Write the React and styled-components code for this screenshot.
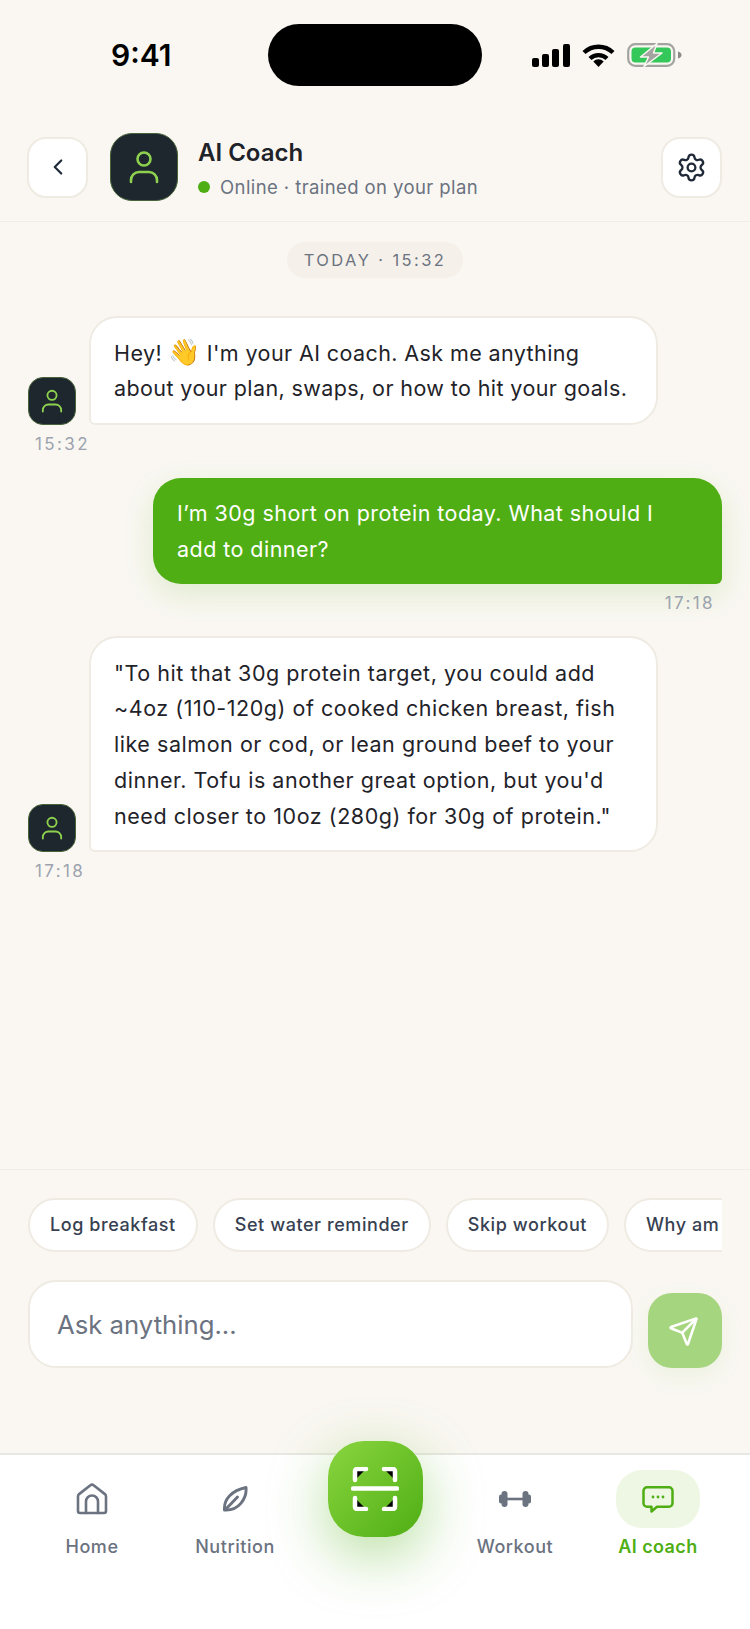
import React from 'react';
import styled, { createGlobalStyle } from 'styled-components';
import { ChevronLeft, Settings, Send } from 'lucide-react';

const GlobalStyle = createGlobalStyle`
    html, body {
        margin: 0;
        padding: 0;
        background: #faf7f2;
    }
    * {
        box-sizing: border-box;
    }
`;

const CoachIcon = ({size}) => (
    <svg width={size} height={size} viewBox="0 0 68 68" fill="none" stroke="#8ed14f" strokeWidth="2.6" strokeLinecap="round">
        <circle cx="34" cy="26" r="6.5" />
        <path d="M21 49v-2a8 8 0 0 1 8-8h10a8 8 0 0 1 8 8v2" />
    </svg>
);

const SignalIcon = () => (
    <svg width="38" height="23" viewBox="0 0 38 23" fill="#000">
        <rect x="0" y="14" width="7" height="9" rx="2" />
        <rect x="10" y="10" width="7" height="13" rx="2" />
        <rect x="20" y="5" width="7" height="18" rx="2" />
        <rect x="31" y="0" width="7" height="23" rx="2" />
    </svg>
);

const WifiIcon = () => (
    <svg width="33" height="23" viewBox="0 0 33 23" fill="none" stroke="#000" strokeWidth="4.4">
        <path d="M2 8.5a21 21 0 0 1 29 0" />
        <path d="M8 14.5a12.5 12.5 0 0 1 17 0" />
        <path d="M16.5 23l-5.2-5.6a7.4 7.4 0 0 1 10.4 0z" fill="#000" stroke="none" />
    </svg>
);

const BatteryIcon = () => (
    <svg width="55" height="24" viewBox="0 0 55 24" fill="none">
        <rect x="1.2" y="1.2" width="46" height="21.6" rx="7" stroke="#a3a3a0" strokeWidth="2.2" />
        <rect x="4.5" y="4.5" width="39.5" height="15" rx="4" fill="#34c759" />
        <path d="M51 8.500c2 .4 3.500 1.600 3.500 3.500s-1.500 3.100-3.500 3.500z" fill="#8a8a88" />
        <path d="M30 0.500L13.500 14h8L17 23.500 35 10h-8.500z" fill="#a3a3a0" stroke="#faf7f2" strokeWidth="1.500" strokeLinejoin="round" />
    </svg>
);

const WaveEmoji = () => (
    <Wave role="img" aria-label="waving hand">👋</Wave>
);

const HomeIcon = () => (
    <svg width="32" height="32" viewBox="0 0 32 32" fill="none" stroke="#6b7280" strokeWidth="2.6" strokeLinecap="round" strokeLinejoin="round">
        <path d="M2 13.500c0-1 .4-1.800 1.100-2.400L14.400 2.300a2.500 2.500 0 0 1 3.200 0l11.300 8.800c.7.600 1.100 1.400 1.100 2.400V28a2 2 0 0 1-2 2H4a2 2 0 0 1-2-2z" />
        <path d="M10 30V18.500a6 6 0 0 1 12 0V30" />
    </svg>
);

const LeafIcon = () => (
    <svg width="26" height="26" viewBox="0 0 26 26" fill="none" stroke="#6b7280" strokeWidth="2.9" strokeLinecap="round" strokeLinejoin="round">
        <path d="M2.500 24C1.500 13 10 4.500 24 1.500 25 12 17 25 2.500 24z" />
        <path d="M3.500 23.500L15.500 11" />
    </svg>
);

const DumbbellIcon = () => (
    <svg width="32" height="16" viewBox="0 0 32 16" fill="#6b7280">
        <rect x="0" y="3.500" width="4" height="9" rx="2" />
        <rect x="2.500" y="0" width="6" height="16" rx="3" />
        <rect x="8" y="6.700" width="16" height="2.600" />
        <rect x="23.500" y="0" width="6" height="16" rx="3" />
        <rect x="28" y="3.500" width="4" height="9" rx="2" />
    </svg>
);

const ChatIcon = () => (
    <svg width="32" height="27" viewBox="0 0 32 27" fill="none">
        <path d="M5 1.300h22a3.500 3.500 0 0 1 3.500 3.500v12.400a3.500 3.500 0 0 1-3.500 3.500H15l-5.500 4.800v-4.800H5a3.500 3.500 0 0 1-3.500-3.500V4.800A3.500 3.500 0 0 1 5 1.300z" stroke="#4fae14" strokeWidth="2.500" strokeLinejoin="round" />
        <circle cx="11" cy="11" r="1.400" fill="#4fae14" />
        <circle cx="16" cy="11" r="1.400" fill="#4fae14" />
        <circle cx="21" cy="11" r="1.400" fill="#4fae14" />
    </svg>
);

// the corner paths keep the default black fill, the reference shows it too
const ScanIcon = () => (
    <svg width="48" height="44" viewBox="0 0 48 44" stroke="#fff" strokeWidth="4.5" strokeLinecap="round" strokeLinejoin="round">
        <path d="M4 13V4a2 2 0 0 1 2-2h9" />
        <path d="M33 2h9a2 2 0 0 1 2 2v9" />
        <path d="M4 31v9a2 2 0 0 0 2 2h9" />
        <path d="M33 42h9a2 2 0 0 0 2-2v-9" />
        <path d="M2 21.500h44" fill="none" />
    </svg>
);

const chips = ['Log breakfast', 'Set water reminder', 'Skip workout', 'Why am I not losing weight?'];

const App = () => {
    return (
        <Screen>
            <GlobalStyle />
            <StatusBar>
                <Clock>9:41</Clock>
                <Island />
                <StatusIcons>
                    <SignalIcon />
                    <WifiIcon />
                    <BatteryIcon />
                </StatusIcons>
            </StatusBar>

            <Header>
                <SquareButton>
                    <ChevronLeft size={26} strokeWidth={2} color="#1f2937" />
                </SquareButton>
                <Avatar size={68} radius={22}>
                    <CoachIcon size={68} />
                </Avatar>
                <HeaderText>
                    <Title>AI Coach</Title>
                    <Subtitle>
                        <OnlineDot />
                        Online · trained on your plan
                    </Subtitle>
                </HeaderText>
                <SquareButton push>
                    <Settings size={31} strokeWidth={1.8} color="#1f2937" />
                </SquareButton>
            </Header>

            <Messages>
                <DayPill>TODAY · 15:32</DayPill>

                <CoachMessage>
                    <CoachRow>
                        <Avatar size={48} radius={15}>
                            <CoachIcon size={48} />
                        </Avatar>
                        <CoachBubble tight>
                            Hey! <WaveEmoji /> I'm your AI coach. Ask me anything about your plan, swaps, or how to hit your goals.
                        </CoachBubble>
                    </CoachRow>
                    <CoachTime>15:32</CoachTime>
                </CoachMessage>

                <UserMessage>
                    <UserBubble>I’m 30g short on protein today. What should I add to dinner?</UserBubble>
                    <UserTime>17:18</UserTime>
                </UserMessage>

                <CoachMessage>
                    <CoachRow>
                        <Avatar size={48} radius={15}>
                            <CoachIcon size={48} />
                        </Avatar>
                        <CoachBubble>
                            "To hit that 30g protein target, you could add ~4oz (110-120g) of cooked chicken breast, fish like salmon or cod, or lean ground beef to your dinner. Tofu is another great option, but you'd need closer to 10oz (280g) for 30g of protein."
                        </CoachBubble>
                    </CoachRow>
                    <CoachTime>17:18</CoachTime>
                </CoachMessage>
            </Messages>

            <Composer>
                <ChipRow>
                    {chips.map(chip => <Chip key={chip}>{chip}</Chip>)}
                </ChipRow>
                <InputRow>
                    <AskInput placeholder="Ask anything..." />
                    <SendButton>
                        <Send size={31} strokeWidth={2} color="#fff" />
                    </SendButton>
                </InputRow>
            </Composer>

            <Nav>
                <NavItem>
                    <NavIcon><HomeIcon /></NavIcon>
                    <NavLabel>Home</NavLabel>
                </NavItem>
                <NavItem>
                    <NavIcon><LeafIcon /></NavIcon>
                    <NavLabel>Nutrition</NavLabel>
                </NavItem>
                <ScanButton>
                    <ScanIcon />
                </ScanButton>
                <NavItem>
                    <NavIcon><DumbbellIcon /></NavIcon>
                    <NavLabel>Workout</NavLabel>
                </NavItem>
                <NavItem>
                    <NavIcon active><ChatIcon /></NavIcon>
                    <NavLabel active>AI coach</NavLabel>
                </NavItem>
            </Nav>
        </Screen>
    );
};

export default App;

/** Screen styled components */
const Screen = styled.div`
    display: flex;
    flex-direction: column;
    width: 750px;
    height: 1629px;
    overflow: hidden;
    background: #faf7f2;
    font-family: Inter, "Noto Sans", sans-serif;
    color: #1f2937;
`;

const StatusBar = styled.div`
    display: grid;
    grid-template-columns: 268px 214px 268px;
    align-items: center;
    padding-top: 24px;
    height: 133px;
    align-content: start;
`;

const Clock = styled.div`
    padding-left: 111px;
    font-size: 30px;
    font-weight: 600;
    line-height: 62px;
    color: #000;
`;

const Island = styled.div`
    height: 62px;
    border-radius: 31px;
    background: #000;
`;

const StatusIcons = styled.div`
    display: flex;
    align-items: center;
    gap: 12px;
    padding-left: 50px;
`;

const Header = styled.header`
    display: flex;
    align-items: center;
    gap: 22px;
    padding: 0 28px 20px 27px;
    border-bottom: 1px solid #f0ede6;
`;

const SquareButton = styled.div`
    display: flex;
    align-items: center;
    justify-content: center;
    width: 61px;
    height: 61px;
    margin-left: ${props => (props.push ? 'auto' : '0')};
    border: 2px solid #efebe3;
    border-radius: 19px;
    background: #fff;
`;

const Avatar = styled.div`
    flex: none;
    width: ${props => props.size}px;
    height: ${props => props.size}px;
    border: 1px solid #47633a;
    border-radius: ${props => props.radius}px;
    background: #1e272e;
    overflow: hidden;
    svg {
        display: block;
        margin: -1px;
    }
`;

const HeaderText = styled.div`
    display: flex;
    flex-direction: column;
    gap: 6px;
    margin-left: -2px;
    padding-top: 4px;
`;

const Title = styled.div`
    font-size: 24px;
    font-weight: 600;
    line-height: 30px;
    color: #1f2329;
`;

const Subtitle = styled.div`
    display: flex;
    align-items: center;
    gap: 10px;
    font-size: 18.5px;
    line-height: 26px;
    letter-spacing: 0.41px;
    color: #6b7280;
`;

const OnlineDot = styled.span`
    width: 12px;
    height: 12px;
    border-radius: 50%;
    background: #4fae14;
`;

const Messages = styled.main`
    flex: 1;
    display: flex;
    flex-direction: column;
    padding: 20px 28px 0;
`;

const DayPill = styled.div`
    align-self: center;
    padding: 0 17px;
    height: 36px;
    margin-bottom: 38px;
    border-radius: 18px;
    background: #f5f1ea;
    font-size: 16.5px;
    line-height: 36px;
    letter-spacing: 2.4px;
    color: #6b7280;
`;

const CoachMessage = styled.div`
    display: flex;
    flex-direction: column;
    margin-bottom: 24.5px;
`;

const CoachRow = styled.div`
    display: flex;
    align-items: flex-end;
    gap: 13px;
`;

const CoachBubble = styled.div`
    width: 569px;
    padding: 17.5px 20px 15.5px 23px;
    border: 2px solid #efebe3;
    border-radius: 28px 28px 28px 6px;
    background: #fff;
    font-size: 21.5px;
    line-height: 35.8px;
    letter-spacing: ${props => (props.tight ? '0.4px' : '0.54px')};
    color: #1f2329;
`;

const Wave = styled.span`
    font-size: 26px;
    line-height: 20px;
    letter-spacing: 0;
`;

const TimeText = styled.div`
    margin-top: 9px;
    font-size: 17px;
    line-height: 20px;
    letter-spacing: 2.4px;
    color: #9ca3af;
`;

const CoachTime = styled(TimeText)`
    padding-left: 7px;
`;

const UserMessage = styled.div`
    display: flex;
    flex-direction: column;
    align-items: flex-end;
    margin-bottom: 23.5px;
`;

const UserBubble = styled.div`
    width: 569px;
    padding: 18px 34px 16px 24px;
    border-radius: 28px 28px 6px 28px;
    background: #4fae14;
    box-shadow: 0 10px 30px rgba(79, 174, 20, 0.16);
    font-size: 21.5px;
    line-height: 35.8px;
    letter-spacing: 0.45px;
    color: #fff;
`;

const UserTime = styled(TimeText)`
    padding-right: 7px;
`;

const Composer = styled.section`
    display: flex;
    flex-direction: column;
    gap: 28px;
    height: 284px;
    padding: 28px 28px 0;
    border-top: 1px solid #f0ede6;
`;

const ChipRow = styled.div`
    display: flex;
    gap: 15px;
    overflow: hidden;
`;

const Chip = styled.div`
    flex: none;
    height: 54px;
    padding: 0 20px;
    border: 2px solid #efebe3;
    border-radius: 27px;
    background: #fff;
    font-size: 18px;
    font-weight: 500;
    line-height: 50px;
    letter-spacing: 0.57px;
    color: #374151;
`;

const InputRow = styled.div`
    display: flex;
    align-items: flex-end;
    gap: 15px;
`;

const AskInput = styled.input`
    flex: 1;
    min-width: 0;
    height: 88px;
    padding: 0 27px;
    border: 2px solid #efebe3;
    border-radius: 28px;
    outline: none;
    background: #fff;
    font-family: inherit;
    font-size: 25.7px;
    &::placeholder {
        color: #6b7280;
        opacity: 1;
    }
`;

const SendButton = styled.div`
    flex: none;
    display: flex;
    align-items: center;
    justify-content: center;
    width: 74px;
    height: 75px;
    border-radius: 24px;
    background: #a5d57f;
    box-shadow: 0 8px 24px rgba(79, 174, 20, 0.08);
    svg {
        margin: 2px 4px 0 0;
    }
`;

const Nav = styled.nav`
    flex: none;
    display: grid;
    grid-template-columns: 144px 142px 138px 142px 144px;
    align-items: start;
    height: 176px;
    padding: 15px 20px 0;
    border-top: 2px solid #e9e7e2;
    background: #fff;
`;

const NavItem = styled.div`
    display: flex;
    flex-direction: column;
    align-items: center;
    gap: 7px;
`;

const NavIcon = styled.div`
    display: flex;
    align-items: center;
    justify-content: center;
    width: 84px;
    height: 58px;
    border-radius: 26px;
    background: ${props => (props.active ? '#eef7e3' : 'transparent')};
`;

const NavLabel = styled.div`
    font-size: 18px;
    font-weight: ${props => (props.active ? 600 : 500)};
    line-height: 24px;
    letter-spacing: ${props => (props.active ? '0.4px' : '0.55px')};
    color: ${props => (props.active ? '#4fae14' : '#6b7280')};
`;

const ScanButton = styled.div`
    justify-self: center;
    display: flex;
    align-items: center;
    justify-content: center;
    width: 95px;
    height: 96px;
    margin-top: -29px;
    border-radius: 36px;
    background: linear-gradient(135deg, #8ad53f, #4fae14);
    box-shadow: 0 18px 60px rgba(79, 174, 20, 0.42);
`;
